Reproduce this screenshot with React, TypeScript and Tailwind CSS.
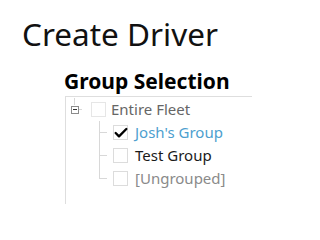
import { Check } from 'lucide-react';

type Child = { label: string; checked?: boolean; color: string; last?: boolean };

const children: Child[] = [
  { label: "Josh's Group", checked: true, color: 'text-[#4d9fcf]' },
  { label: 'Test Group', color: 'text-[#1a1a1a]' },
  { label: '[Ungrouped]', color: 'text-[#8a8a8a]', last: true },
];

function Box({ checked }: { checked?: boolean }) {
  return (
    <span className="relative block w-[15px] h-[15px] border border-[#dcdcdc] bg-white shrink-0">
      {checked && (
        <Check className="absolute -left-[1px] -top-[1px] text-black" size={16} strokeWidth={3.5} />
      )}
    </span>
  );
}

export default function App() {
  return (
    <div className="w-[252px] h-[204px] bg-white overflow-hidden font-['Noto_Sans',sans-serif]">
      {/* Page title */}
      <h1 className="pt-[16px] pl-[22px] text-[31.5px] leading-[36px] text-[#111] font-normal whitespace-nowrap">
        Create Driver
      </h1>

      <div className="pl-[64px] mt-[17px]">
        <h2 className="text-[21px] leading-[24px] font-bold text-black whitespace-nowrap">Group Selection</h2>

        {/* Tree panel */}
        <div className="ml-[1px] mt-[3px] h-[120px] border-l border-t border-[#dedede] pt-[1px]">
          <div className="relative h-[23px] flex items-center">
            <span className="absolute left-[8px] top-0 h-[7px] border-l border-[#d8d8d8]" />
            <span className="ml-[5px] w-[8px] h-[8px] border border-[#8c8c8c] flex items-center justify-center">
              <span className="w-[4px] h-[1px] bg-[#333]" />
            </span>
            <span className="w-[3px] h-[1px] bg-[#d8d8d8]" />
            <span className="ml-[9px] block w-[15px] h-[15px] border border-[#e6e6e6]" />
            <span className="ml-[5px] text-[15px] text-[#666] whitespace-nowrap">Entire Fleet</span>
          </div>
          {children.map((c) => (
            <div key={c.label} className="relative h-[23px] flex items-center pl-[33px]">
              <span
                className={`absolute left-[33px] top-0 border-l border-[#d8d8d8] ${c.last ? 'h-[12px]' : 'h-[23px]'}`}
              />
              <span className="w-[8px] h-[1px] bg-[#d8d8d8]" />
              <span className="ml-[6px]">
                <Box checked={c.checked} />
              </span>
              <span className={`ml-[7px] text-[15px] whitespace-nowrap ${c.color}`}>{c.label}</span>
            </div>
          ))}
        </div>
      </div>
    </div>
  );
}
